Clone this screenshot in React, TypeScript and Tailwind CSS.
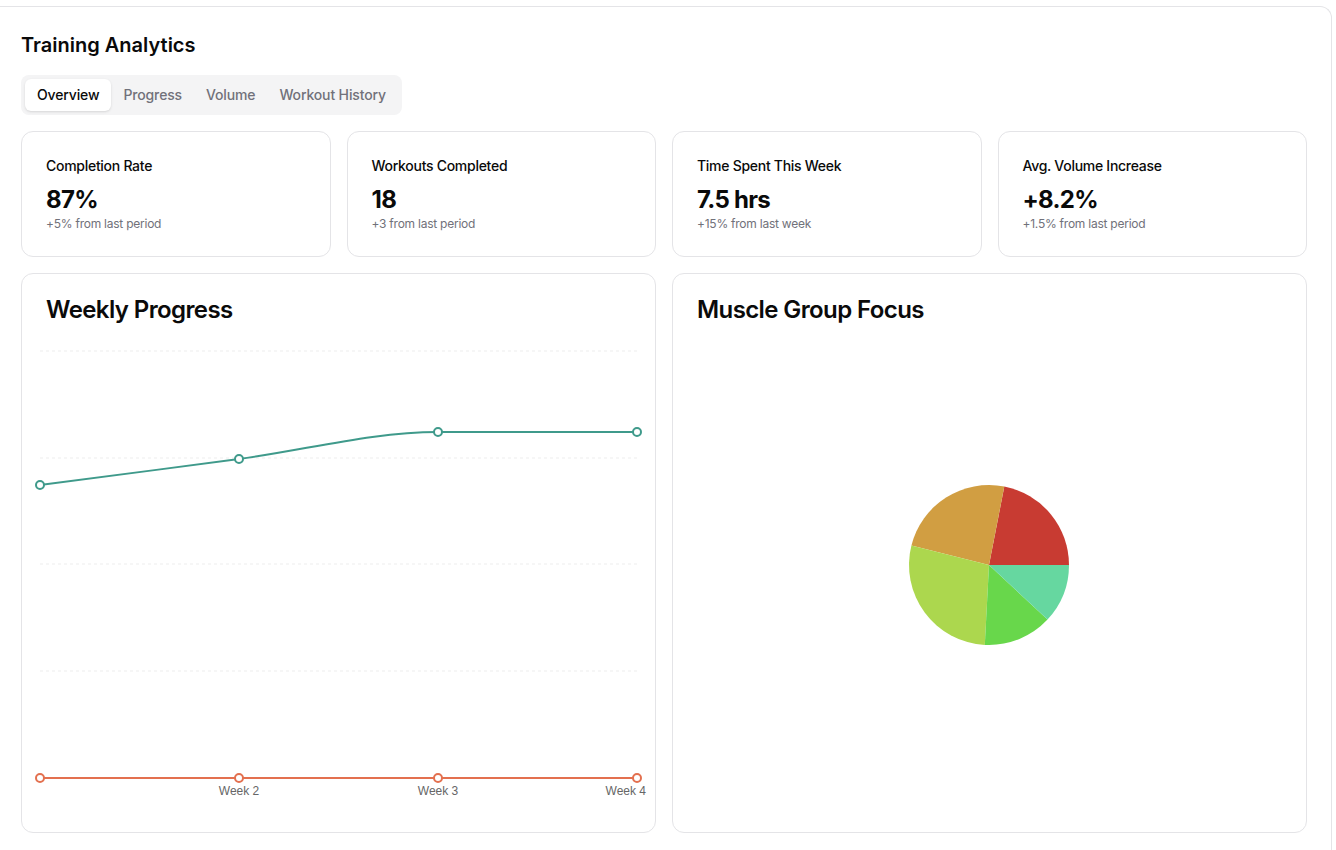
import React, { FC } from 'react';

interface IStat {
  label: string;
  value: string;
  note: string;
}

const stats: IStat[] = [
  { label: 'Completion Rate', value: '87%', note: '+5% from last period' },
  { label: 'Workouts Completed', value: '18', note: '+3 from last period' },
  { label: 'Time Spent This Week', value: '7.5 hrs', note: '+15% from last week' },
  { label: 'Avg. Volume Increase', value: '+8.2%', note: '+1.5% from last period' },
];

const tabs = ['Overview', 'Progress', 'Volume', 'Workout History'];

const xs = [18, 217, 416, 615];
const gridYs = [29, 136, 242, 349];
const tealYs = [163, 137, 110, 110];

const StatCard: FC<IStat> = ({ label, value, note }) => (
  <div className="rounded-xl border border-[#e4e4e7] bg-white">
    <div className="px-6 pt-6 pb-2">
      <h3 className="text-sm font-medium leading-5 tracking-[-0.02em] text-[#0a0a0a]">
        {label}
      </h3>
    </div>
    <div className="px-6 pb-6">
      <div className="text-2xl font-bold leading-8 tracking-[-0.03em] text-[#0a0a0a]">
        {value}
      </div>
      <p className="text-xs leading-4 tracking-[-0.02em] text-[#71717a]">{note}</p>
    </div>
  </div>
);

const WeeklyChart: FC = () => (
  <svg width="633" height="510" className="block">
    {gridYs.map((y) => (
      <line
        key={y}
        x1={18}
        x2={615}
        y1={y}
        y2={y}
        stroke="#ededed"
        strokeDasharray="3 3"
      />
    ))}
    <path
      d="M18,163 C84.3,154.4 150.7,145.8 217,137 C283.3,128.2 349.7,110 416,110 L615,110"
      fill="none"
      stroke="#3f9a8b"
      strokeWidth={2}
    />
    <path d="M18,456 L615,456" fill="none" stroke="#e3704f" strokeWidth={2} />
    {xs.map((x, i) => (
      <circle
        key={`t${x}`}
        cx={x}
        cy={tealYs[i]}
        r={4}
        fill="#fff"
        stroke="#3f9a8b"
        strokeWidth={2}
      />
    ))}
    {xs.map((x) => (
      <circle
        key={`o${x}`}
        cx={x}
        cy={456}
        r={4}
        fill="#fff"
        stroke="#e3704f"
        strokeWidth={2}
      />
    ))}
    <g fontSize="12" fill="#666" fontFamily="'Liberation Sans', Arial, sans-serif">
      <text x={217} y={473} textAnchor="middle">
        Week 2
      </text>
      <text x={416} y={473} textAnchor="middle">
        Week 3
      </text>
      <text x={624} y={473} textAnchor="end">
        Week 4
      </text>
    </g>
  </svg>
);

const MusclePie: FC = () => (
  <svg width="633" height="510" className="block">
    <path d="M316,243 L396,243 A80,80 0 0 0 331.3,164.5 Z" fill="#c83b32" />
    <path d="M316,243 L331.3,164.5 A80,80 0 0 0 238.4,223.6 Z" fill="#d19e42" />
    <path d="M316,243 L238.4,223.6 A80,80 0 0 0 311.8,322.9 Z" fill="#acd74e" />
    <path d="M316,243 L311.8,322.9 A80,80 0 0 0 374.5,297.6 Z" fill="#68d74b" />
    <path d="M316,243 L374.5,297.6 A80,80 0 0 0 396,243 Z" fill="#66d7a0" />
  </svg>
);

const ChartCard: FC<{ title: string; children: React.ReactNode }> = ({ title, children }) => (
  <div className="h-[560px] rounded-xl border border-[#e4e4e7] bg-white">
    <div className="px-6 pt-6">
      <h3 className="text-2xl font-semibold leading-none tracking-tight text-[#0a0a0a]">
        {title}
      </h3>
    </div>
    {children}
  </div>
);

const App: FC = () => {
  return (
    <div
      className="min-h-screen bg-white pt-[6px] pr-1"
      style={{ fontFamily: 'Inter, "Noto Sans", sans-serif' }}
    >
      <div className="rounded-tr-xl border-t border-r border-[#e4e4e7] bg-white pl-[21px] pr-6 pt-6 pb-6">
        <h2 className="text-xl font-semibold leading-7 text-[#0a0a0a]">Training Analytics</h2>
        <div className="mt-4 inline-flex h-10 items-center rounded-lg bg-[#f4f4f5] p-1">
          {tabs.map((tab, i) => (
            <button
              key={tab}
              className={`h-8 rounded-md px-3 text-sm font-medium tracking-[-0.01em] ${
                i === 0 ? 'bg-white text-[#0a0a0a] shadow-sm' : 'text-[#71717a]'
              }`}
            >
              {tab}
            </button>
          ))}
        </div>
        <div className="mt-4 grid grid-cols-4 gap-4">
          {stats.map((s) => (
            <StatCard key={s.label} {...s} />
          ))}
        </div>
        <div className="mt-4 grid grid-cols-2 gap-4">
          <ChartCard title="Weekly Progress">
            <WeeklyChart />
          </ChartCard>
          <ChartCard title="Muscle Group Focus">
            <MusclePie />
          </ChartCard>
        </div>
      </div>
    </div>
  );
};

export default App;
